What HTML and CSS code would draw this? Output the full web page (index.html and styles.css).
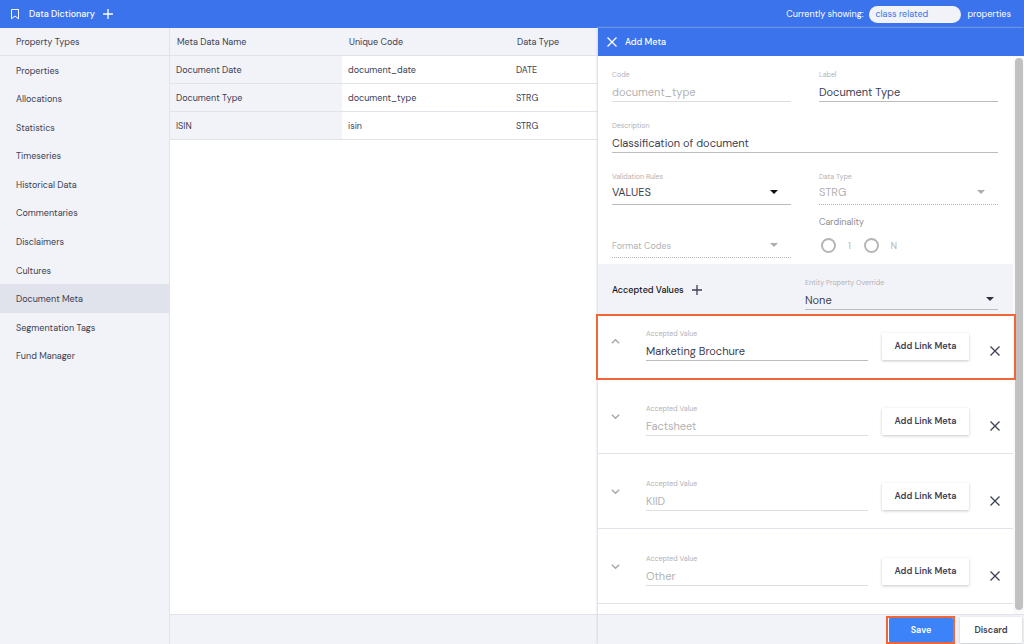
FILE: index.html
```
<!DOCTYPE html>
<html lang="en">
<head>
<meta charset="utf-8">
<title>Data Dictionary</title>
<link rel="stylesheet" href="styles.css">
</head>
<body>
<svg class="sprite" aria-hidden="true">
  <symbol id="plus" viewBox="0 0 12 12"><path d="M6 1v10M1 6h10"/></symbol>
  <symbol id="cross" viewBox="0 0 12 12"><path d="M1.5 1.5l9 9M10.5 1.5l-9 9"/></symbol>
  <symbol id="down" viewBox="0 0 12 12"><path d="M2 4l4 4 4-4"/></symbol>
  <symbol id="up" viewBox="0 0 12 12"><path d="M2 8l4-4 4 4"/></symbol>
</svg>
<header class="topbar">
  <svg class="icon bookmark" viewBox="0 0 12 12"><path d="M2.500 1.500h7v9.300L6 8l-3.500 2.800z"/></svg>
  <h1 class="topbar-title">Data Dictionary</h1>
  <button class="icon-button" type="button" aria-label="Add"><svg class="icon"><use href="#plus"/></svg></button>
  <div class="showing">
    <label for="scope">Currently showing:</label>
    <select id="scope" class="pill"><option>class related</option></select>
    <span>properties</span>
  </div>
</header>
<div class="layout">
  <nav class="sidebar">
    <h2 class="sidebar-title">Property Types</h2>
    <ul class="menu">
      <li><a href="#">Properties</a></li>
      <li><a href="#">Allocations</a></li>
      <li><a href="#">Statistics</a></li>
      <li><a href="#">Timeseries</a></li>
      <li><a href="#">Historical Data</a></li>
      <li><a href="#">Commentaries</a></li>
      <li><a href="#">Disclaimers</a></li>
      <li><a href="#">Cultures</a></li>
      <li><a href="#" class="selected" aria-current="page">Document Meta</a></li>
      <li><a href="#">Segmentation Tags</a></li>
      <li><a href="#">Fund Manager</a></li>
    </ul>
  </nav>
  <main class="main">
    <table class="table">
      <colgroup><col class="col-name"><col class="col-code"><col></colgroup>
      <thead><tr><th>Meta Data Name</th><th>Unique Code</th><th>Data Type</th></tr></thead>
      <tbody>
        <tr><td>Document Date</td><td>document_date</td><td>DATE</td></tr>
        <tr><td>Document Type</td><td>document_type</td><td>STRG</td></tr>
        <tr><td>ISIN</td><td>isin</td><td>STRG</td></tr>
      </tbody>
    </table>
    <div class="main-footer"></div>
  </main>
  <form class="drawer">
    <div class="drawer-header">
      <button class="icon-button" type="button" aria-label="Close"><svg class="icon"><use href="#cross"/></svg></button>
      <h2 class="drawer-title">Add Meta</h2>
    </div>
    <div class="drawer-body">
      <div class="drawer-content">
        <div class="fields">
          <div class="field"><label for="code">Code</label><input id="code" value="document_type" disabled></div>
          <div class="field"><label for="label">Label</label><input id="label" value="Document Type"></div>
          <div class="field wide"><label for="desc">Description</label><input id="desc" value="Classification of document"></div>
          <div class="field rule"><label for="rules">Validation Rules</label><div class="select"><select id="rules"><option>VALUES</option></select></div></div>
          <div class="field rule"><label for="type">Data Type</label><div class="select off"><select id="type" disabled><option>STRG</option></select></div></div>
        </div>
        <div class="fields options">
          <div class="field rule format"><div class="select off"><select aria-label="Format Codes" disabled><option>Format Codes</option></select></div></div>
          <fieldset class="cardinality" disabled>
            <legend>Cardinality</legend>
            <div class="radios">
              <label><input type="radio" name="cardinality">1</label>
              <label><input type="radio" name="cardinality">N</label>
            </div>
          </fieldset>
        </div>
        <div class="band">
          <h3 class="band-title">Accepted Values</h3>
          <button class="icon-button" type="button" aria-label="Add value"><svg class="icon"><use href="#plus"/></svg></button>
          <div class="field override"><label for="override">Entity Property Override</label><div class="select"><select id="override"><option>None</option></select></div></div>
        </div>
        <div class="value active">
          <button class="toggle" type="button" aria-label="Collapse"><svg class="icon"><use href="#up"/></svg></button>
          <div class="field"><label for="v1">Accepted Value</label><input id="v1" value="Marketing Brochure"></div>
          <button class="button link" type="button">Add Link Meta</button>
          <button class="remove" type="button" aria-label="Remove"><svg class="icon"><use href="#cross"/></svg></button>
        </div>
        <div class="value">
          <button class="toggle" type="button" aria-label="Expand"><svg class="icon"><use href="#down"/></svg></button>
          <div class="field"><label for="v2">Accepted Value</label><input id="v2" value="Factsheet" disabled></div>
          <button class="button link" type="button">Add Link Meta</button>
          <button class="remove" type="button" aria-label="Remove"><svg class="icon"><use href="#cross"/></svg></button>
        </div>
        <div class="value">
          <button class="toggle" type="button" aria-label="Expand"><svg class="icon"><use href="#down"/></svg></button>
          <div class="field"><label for="v3">Accepted Value</label><input id="v3" value="KIID" disabled></div>
          <button class="button link" type="button">Add Link Meta</button>
          <button class="remove" type="button" aria-label="Remove"><svg class="icon"><use href="#cross"/></svg></button>
        </div>
        <div class="value">
          <button class="toggle" type="button" aria-label="Expand"><svg class="icon"><use href="#down"/></svg></button>
          <div class="field"><label for="v4">Accepted Value</label><input id="v4" value="Other" disabled></div>
          <button class="button link" type="button">Add Link Meta</button>
          <button class="remove" type="button" aria-label="Remove"><svg class="icon"><use href="#cross"/></svg></button>
        </div>
      </div>
      <div class="track"><div class="thumb"></div></div>
    </div>
    <div class="drawer-footer">
      <span class="save-frame"><button class="button save" type="button">Save</button></span>
      <button class="button discard" type="button">Discard</button>
    </div>
  </form>
</div>
</body>
</html>
```
FILE: styles.css
```
:root {
  --blue: #3a73eb;
  --panel: #f2f3f8;
  --line: #e1e3eb;
  --ink: #3c4052;
  --muted: #b2b2b4;
  --orange: #f26538;
}

* { box-sizing: border-box; }

body {
  margin: 0;
  min-height: 100vh;
  display: flex;
  flex-direction: column;
  background: #fff;
  color: var(--ink);
  font: 9px/14px "DM Sans", Inter, sans-serif;
}

h1, h2, h3 { margin: 0; font-size: 9px; font-weight: 400; }

button, input, select { font: inherit; color: inherit; }

button, select { cursor: pointer; }

.sprite { position: absolute; width: 0; height: 0; }

.icon {
  display: block;
  width: 12px;
  height: 12px;
  fill: none;
  stroke: currentColor;
  stroke-width: 1.3;
}

.icon-button, .toggle, .remove {
  padding: 0;
  border: 0;
  background: none;
}

/* Top bar */
.topbar {
  display: flex;
  align-items: center;
  height: 28px;
  padding: 0 13px 0 9px;
  background: var(--blue);
  color: #fff;
}

.bookmark { stroke-width: 1; }

.topbar-title { margin: 0 7px 0 8px; font-weight: 500; }

.showing {
  display: flex;
  align-items: center;
  gap: 6px;
  margin-left: auto;
}

.pill {
  appearance: none;
  width: 92px;
  height: 17px;
  padding: 0 6px;
  border: 0;
  border-radius: 9px;
  background: var(--panel);
  color: var(--blue);
}

/* Columns */
.layout {
  flex: 1;
  display: grid;
  grid-template-columns: 170px 1fr 426px;
}

.sidebar {
  background: var(--panel);
  border-right: 1px solid var(--line);
}

.sidebar-title {
  padding: 7px 16px 6px;
  border-bottom: 1px solid var(--line);
}

.menu {
  display: grid;
  grid-auto-rows: 1fr;
  min-height: 314px;
  margin: 0;
  padding: 0;
  list-style: none;
}

.menu a {
  display: flex;
  align-items: center;
  height: 100%;
  padding: 1px 16px 0;
  color: inherit;
  text-decoration: none;
}

.menu .selected { background: #e0e2ec; }

.main { display: flex; flex-direction: column; min-width: 0; }

.table {
  width: 100%;
  border-collapse: separate;
  border-spacing: 0;
  table-layout: fixed;
}

.col-name { width: 172px; }
.col-code { width: 168px; }

.table th, .table td {
  height: 28px;
  padding: 1px 6px 0;
  border-bottom: 1px solid var(--line);
  text-align: left;
  font-weight: 400;
}

.table th { padding: 1px 7px 0; background: var(--panel); }

.table td:first-child { background: var(--panel); }

.main-footer {
  height: 30px;
  margin-top: auto;
  border-top: 1px solid var(--line);
  background: var(--panel);
}

/* Drawer */
.drawer {
  display: flex;
  flex-direction: column;
  box-shadow: -1px 0 2px #d5d8e4;
}

.drawer-header {
  display: flex;
  align-items: center;
  gap: 7px;
  height: 28px;
  padding: 0 8px;
  background: var(--blue);
  color: #fff;
}

.drawer-title { font-weight: 500; }

.drawer-body { flex: 1; display: flex; }

.drawer-content { flex: 1; min-width: 0; background: #fff; }

.track {
  display: flex;
  width: 11px;
  padding: 2px 1px 4px 2px;
  background: #fafafa;
}

.thumb { flex: 1; border-radius: 4px; background: #c1c1c1; }

.fields {
  display: grid;
  grid-template-columns: 1fr 1fr;
  gap: 18px 28px;
  padding: 13px 15px 0 14px;
}

.wide { grid-column: 1 / -1; }

.field { display: flex; flex-direction: column; gap: 3px; min-width: 0; }

.field label { color: var(--muted); font-size: 7px; line-height: 11px; }

.field input, .field select {
  appearance: none;
  width: 100%;
  height: 19px;
  padding: 0;
  border: 0;
  border-bottom: 1px solid #bcbcbf;
  border-radius: 0;
  background: none;
  font-size: 11px;
  opacity: 1;
}

.field input:disabled, .field select:disabled { color: var(--muted); }

.field input:disabled { border-bottom-color: #dedee0; }

.field select:disabled { border-bottom: 1px dotted #b4b4b6; }

.rule { gap: 0; }

.rule select { height: 23px; padding-bottom: 3px; }

.select { position: relative; }

.select::after {
  content: "";
  position: absolute;
  top: 8px;
  right: 13px;
  border: 4px solid transparent;
  border-top-color: #111;
  border-bottom: 0;
  pointer-events: none;
}

.select.off::after { border-top-color: #adadaf; }

.options { padding: 12px 15px 6px 14px; }

.format { justify-content: flex-end; }

.format select { padding-bottom: 0; font-size: 9px; }

.cardinality { margin: 0; padding: 0; border: 0; color: var(--muted); }

.cardinality legend { padding: 0; color: #8d8d91; line-height: 11px; }

.radios { display: flex; gap: 13px; padding: 10px 0 5px 2px; }

.radios label { display: flex; align-items: center; gap: 12px; }

.radios input {
  appearance: none;
  width: 15px;
  height: 15px;
  margin: 0;
  border: 2px solid #b5b5b7;
  border-radius: 50%;
}

.band {
  display: flex;
  align-items: flex-start;
  gap: 7px;
  padding: 13px 15px 4px 14px;
  background: var(--panel);
}

.band-title { margin-top: 6px; color: #111; font-weight: 500; }

.band .icon-button { margin-top: 7px; }

.override { width: 193px; margin-left: auto; }

.override .select::after { top: 6px; right: 4px; border-top-color: #2d3040; }

/* Accepted value rows */
.value {
  position: relative;
  display: flex;
  align-items: flex-start;
  padding: 24px 12px 17px;
  border-bottom: 1px solid var(--line);
}

.value.active { padding: 14px 12px 18px; border-bottom: 0; }

.value.active::after {
  content: "";
  position: absolute;
  inset: 0 -3px -1px -2px;
  border: 2px solid var(--orange);
  pointer-events: none;
}

.value .field { flex: 1; }

.toggle { margin: 8px 25px 0 0; color: #a8a8ab; }

.toggle .icon { width: 11px; height: 11px; stroke-width: 1.6; }

.remove { margin: 17px 0 0 20px; }

.button {
  border: 0;
  border-radius: 1px;
  background: #fff;
  box-shadow: 0 1px 3px #c5c6cc;
  font-weight: 600;
}

.link { width: 87px; height: 27px; margin: 5px 0 0 14px; padding: 0 0 2px; }

.drawer-footer {
  display: flex;
  justify-content: flex-end;
  align-items: center;
  gap: 5px;
  height: 30px;
  padding: 0 2px;
  border-top: 1px solid var(--line);
  background: var(--panel);
}

.save-frame {
  display: flex;
  width: 69px;
  height: 28px;
  padding-left: 1px;
  border: 2px solid var(--orange);
  background: #fff;
}

.save { flex: 1; background: #3c82f8; box-shadow: none; color: #fff; }

.discard { width: 62px; height: 26px; }
```
